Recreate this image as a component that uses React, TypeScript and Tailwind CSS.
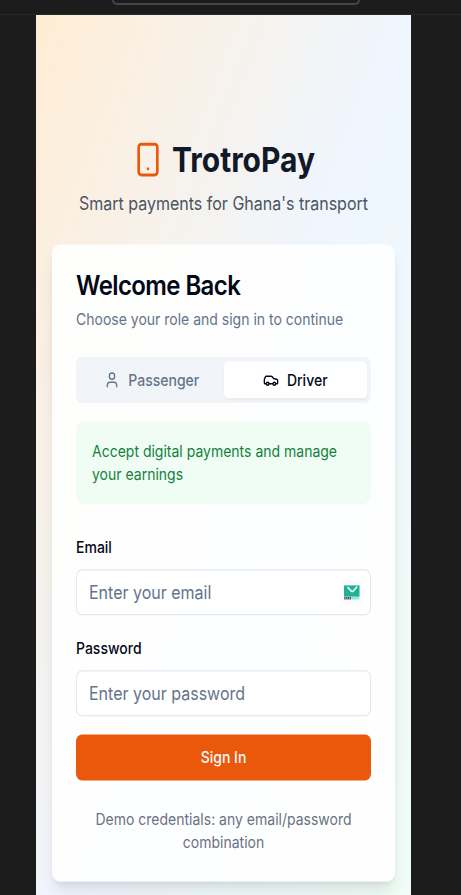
import React from "react";
import { Smartphone, User, Car } from "lucide-react";

function Field({ label, placeholder, children }: { label: string; placeholder: string; children?: React.ReactNode }) {
  return (
    <div>
      <div className="mb-[7px] flex h-[25px] items-center pt-px">
        <label className="text-sm leading-none font-medium text-[#020817]">{label}</label>
      </div>
      <div className="flex h-10 items-center justify-between rounded-md border border-[#e2e8f0] bg-white pr-2 pl-3">
        <span className="text-base text-[#64748b]">{placeholder}</span>
        {children}
      </div>
    </div>
  );
}

function MailBadge() {
  return (
    <svg width="20" height="20" viewBox="0 0 20 20">
      <rect width="20" height="20" rx="2" fill="#fafafa" />
      <rect x="2" y="4" width="15.5" height="9.8" fill="#21b18f" />
      <path d="M5.5 5.5 L9.5 9.3 L11 9.3 L15 5" fill="none" stroke="#e6fff8" strokeWidth="1.5" />
      <path d="M2.2 15.2h7" stroke="#4b5563" strokeWidth="2.2" strokeDasharray="1.5 0.4" />
      <path d="M9.8 15.2h7.5" stroke="#7debd0" strokeWidth="2.2" strokeDasharray="2 0.3" />
    </svg>
  );
}

export default function App() {
  return (
    <div className="h-[895px] w-[461px] overflow-hidden bg-[#1c1c1c] font-['Inter',sans-serif]">
      <header className="h-[15px] border-b border-[#292929] pl-[112px]">
        <div className="h-[5px] w-[248px] rounded-b-lg border-2 border-t-0 border-[#444444]" />
      </header>
      <main className="ml-9 h-[866px] w-[375px] origin-top scale-y-[1.1477] bg-linear-to-br from-orange-100 via-blue-50 to-green-50 px-4 pt-[108px]">
        <div className="flex items-center justify-center gap-2">
          <Smartphone className="mb-px size-8 text-[#ea580c]" />
          <h1 className="text-3xl font-bold text-[#111827]">TrotroPay</h1>
        </div>
        <p className="mt-2 text-center text-base text-[#4b5563]">Smart payments for Ghana's transport</p>
        <section className="mt-[24.45px] rounded-lg bg-white/90 p-6 pt-[23.95px] shadow-lg">
          <h2 className="text-2xl leading-none font-semibold tracking-tight text-[#020817]">Welcome Back</h2>
          <p className="mt-[6.3px] text-sm text-[#64748b]">Choose your role and sign in to continue</p>
          <div className="mt-[23.5px] grid h-10 grid-cols-2 rounded-md bg-[#f1f5f9] p-1 text-sm font-medium">
            <div className="flex items-center justify-center gap-2 text-[#64748b]">
              <User className="size-4" />
              Passenger
            </div>
            <div className="flex items-center justify-center gap-2 rounded-sm bg-white text-[#020817] shadow-xs">
              <Car className="size-4" />
              Driver
            </div>
          </div>
          <div className="mt-4 rounded-lg bg-[#f0fdf4] p-4 text-sm text-[#15803d]">
            Accept digital payments and manage your earnings
          </div>
          <div className="mt-[24.6px] flex flex-col gap-4">
            <Field label="Email" placeholder="Enter your email">
              <MailBadge />
            </Field>
            <Field label="Password" placeholder="Enter your password" />
            <button className="h-10 rounded-md bg-[#ea580c] text-sm font-medium text-[#f8fafc]">Sign In</button>
          </div>
          <p className="mt-6 text-center text-sm text-[#6b7280]">Demo credentials: any email/password combination</p>
        </section>
      </main>
    </div>
  );
}
